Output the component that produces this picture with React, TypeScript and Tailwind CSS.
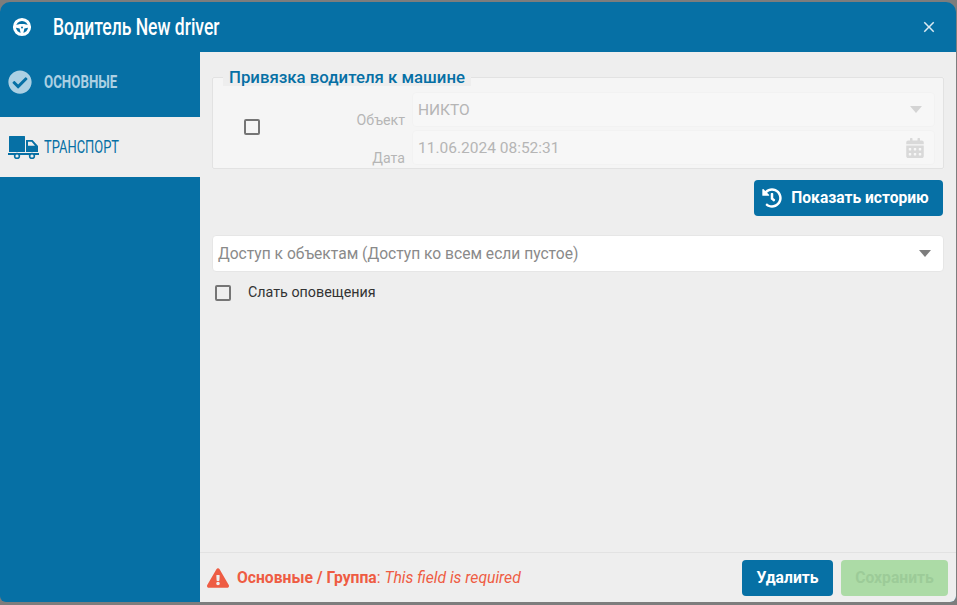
import { FC } from 'react';
import { FaCheckCircle, FaHistory, FaCalendarAlt, FaExclamationTriangle } from 'react-icons/fa';
import { MdClose } from 'react-icons/md';

const SteeringWheel: FC = () => (
  <svg width="20" height="20" viewBox="0 0 20 20" fill="none">
    <circle cx="10" cy="10" r="7.6" stroke="#fff" strokeWidth="3" />
    <path d="M3 8.6 C6 6.6 14 6.6 17 8.6 L17 10.5 L12.4 11.6 L11.2 16.5 L8.8 16.5 L7.6 11.6 L3 10.5 Z" fill="#fff" />
    <circle cx="10" cy="10.4" r="1" fill="#0670a5" />
  </svg>
);

const Truck: FC = () => (
  <svg width="32" height="24" viewBox="0 0 32 24" fill="#0670a5" className="mr-[4px] shrink-0">
    <rect x="1" y="1" width="16" height="16" rx="0.5" />
    <path d="M18 5 H24.5 L30 11 V17 H18 Z M20 6.8 V10.8 H27 L23.6 6.8 Z" fillRule="evenodd" />
    <rect x="0" y="18" width="31" height="2" />
    <circle cx="9" cy="21" r="2.4" fill="#eeeeee" stroke="#0670a5" strokeWidth="1.6" />
    <circle cx="24" cy="21" r="2.4" fill="#eeeeee" stroke="#0670a5" strokeWidth="1.6" />
  </svg>
);

const Caret: FC<{ className: string }> = ({ className }) => (
  <span className={`h-0 w-0 border-x-[6px] border-t-[7px] border-x-transparent ${className}`} />
);

const Checkbox: FC = () => (
  <span className="block h-[16px] w-[16px] rounded-[2px] border-2 border-[#757575]" />
);

export default function App() {
  return (
    <div className="h-[605px] w-[957px] overflow-hidden bg-[#7d7d7d] pb-[3px] pr-[1px] pt-[2px] font-['Roboto',sans-serif]">
      <div className="flex h-full flex-col overflow-hidden rounded-b-[6px] rounded-t-[10px] bg-[#0670a5]">
        <header className="flex h-[50px] shrink-0 items-center pl-[12px] pr-[18px] text-white">
          <SteeringWheel />
          <div className="ml-[21px] flex-1 pt-[2px]">
            <h1 className="inline-block origin-left scale-x-[0.73] whitespace-nowrap text-[24px] font-medium leading-none">
              Водитель New driver
            </h1>
          </div>
          <MdClose size={18} className="text-[#dbeaf2]" />
        </header>
        <div className="flex min-h-0 flex-1">
          <nav className="w-[200px] shrink-0 text-[19px] font-medium">
            <div className="flex h-[65px] items-center pb-[6px] pl-[8px] text-[#acd0e3]">
              <FaCheckCircle size={24} className="mr-[12px]" />
              <span className="inline-block origin-left scale-x-[0.7] whitespace-nowrap pt-[2px] font-bold">ОСНОВНЫЕ</span>
            </div>
            <div className="flex h-[60px] items-center bg-[#eeeeee] pl-[8px] text-[#0670a5]">
              <Truck />
              <span className="inline-block origin-left scale-x-[0.68] whitespace-nowrap font-normal">ТРАНСПОРТ</span>
            </div>
          </nav>
          <main className="flex min-w-0 flex-1 flex-col bg-[#eeeeee]">
            <div className="flex-1 px-[12px] pt-[25px]">
              <fieldset className="relative h-[92px] rounded-[2px] border border-[#e2e2e2] bg-[#f5f5f5]">
                <legend className="absolute -top-[10px] left-[10px] whitespace-nowrap bg-[#eeeeee] px-[6px] text-[16.8px] font-medium leading-[18px] text-[#0670a5]">
                  Привязка водителя к машине
                </legend>
                <div className="flex h-full">
                  <div className="flex w-[78px] items-center justify-center pt-[8px]">
                    <Checkbox />
                  </div>
                  <div className="flex w-[115px] flex-col items-end pr-[1px] pt-[35px] text-[14.2px] leading-[15px] text-[#b5b5b5]">
                    <span>Объект</span>
                    <span className="mt-[23px]">Дата</span>
                  </div>
                  <div className="flex flex-1 flex-col gap-[3px] pl-[6px] pr-[8px] pt-[14px] text-[15.5px] text-[#b5b5b5]">
                    <div className="flex h-[35px] items-center justify-between rounded-[4px] border border-[#f2f2f2] bg-[#f7f7f7] pl-[5px] pr-[12px]">
                      <span className="pt-[2px]">НИКТО</span>
                      <Caret className="border-t-[#d4d4d4]" />
                    </div>
                    <div className="flex h-[35px] items-center justify-between rounded-[4px] border border-[#f2f2f2] bg-[#f7f7f7] pl-[5px] pr-[9px]">
                      <span className="pt-[3px]">11.06.2024 08:52:31</span>
                      <FaCalendarAlt size={20} className="text-[#d9d9d9]" />
                    </div>
                  </div>
                </div>
              </fieldset>
              <div className="mt-[11px] flex justify-end pr-[1px]">
                <button className="flex h-[36px] w-[189px] items-center justify-center gap-[9px] rounded-[4px] bg-[#0670a5] pr-[6px] text-[15.6px] font-bold text-white">
                  <FaHistory size={20} />
                  <span className="pt-[2px]">Показать историю</span>
                </button>
              </div>
              <div className="mt-[19px] flex h-[37px] items-center justify-between rounded-[4px] border border-[#e6e6e6] bg-white pl-[5px] pr-[12px] text-[15.6px] text-[#8a8a8a]">
                <span className="pt-[2px]">Доступ к объектам (Доступ ко всем если пустое)</span>
                <Caret className="border-t-[#7d7d7d]" />
              </div>
              <label className="mt-[10px] flex items-center pl-[3px] text-[14.3px] text-[#333333]">
                <Checkbox />
                <span className="ml-[17px]">Слать оповещения</span>
              </label>
            </div>
            <footer className="flex h-[50px] shrink-0 items-center border-t border-[#e2e2e2] pl-[7px] pr-[8px]">
              <FaExclamationTriangle size={22} className="text-[#ee5c43]" />
              <p className="ml-[8px] flex-1 text-[15.7px] text-[#ee5c43]">
                <b>Основные / Группа</b>: <i>This field is required</i>
              </p>
              <button className="h-[36px] w-[91px] rounded-[4px] bg-[#0670a5] text-[15.7px] font-bold text-white">Удалить</button>
              <button className="ml-[8px] h-[36px] w-[107px] rounded-[4px] bg-[#acdba6] text-[15.7px] font-bold text-[#9ccb98]">Сохранить</button>
            </footer>
          </main>
        </div>
      </div>
    </div>
  );
}
